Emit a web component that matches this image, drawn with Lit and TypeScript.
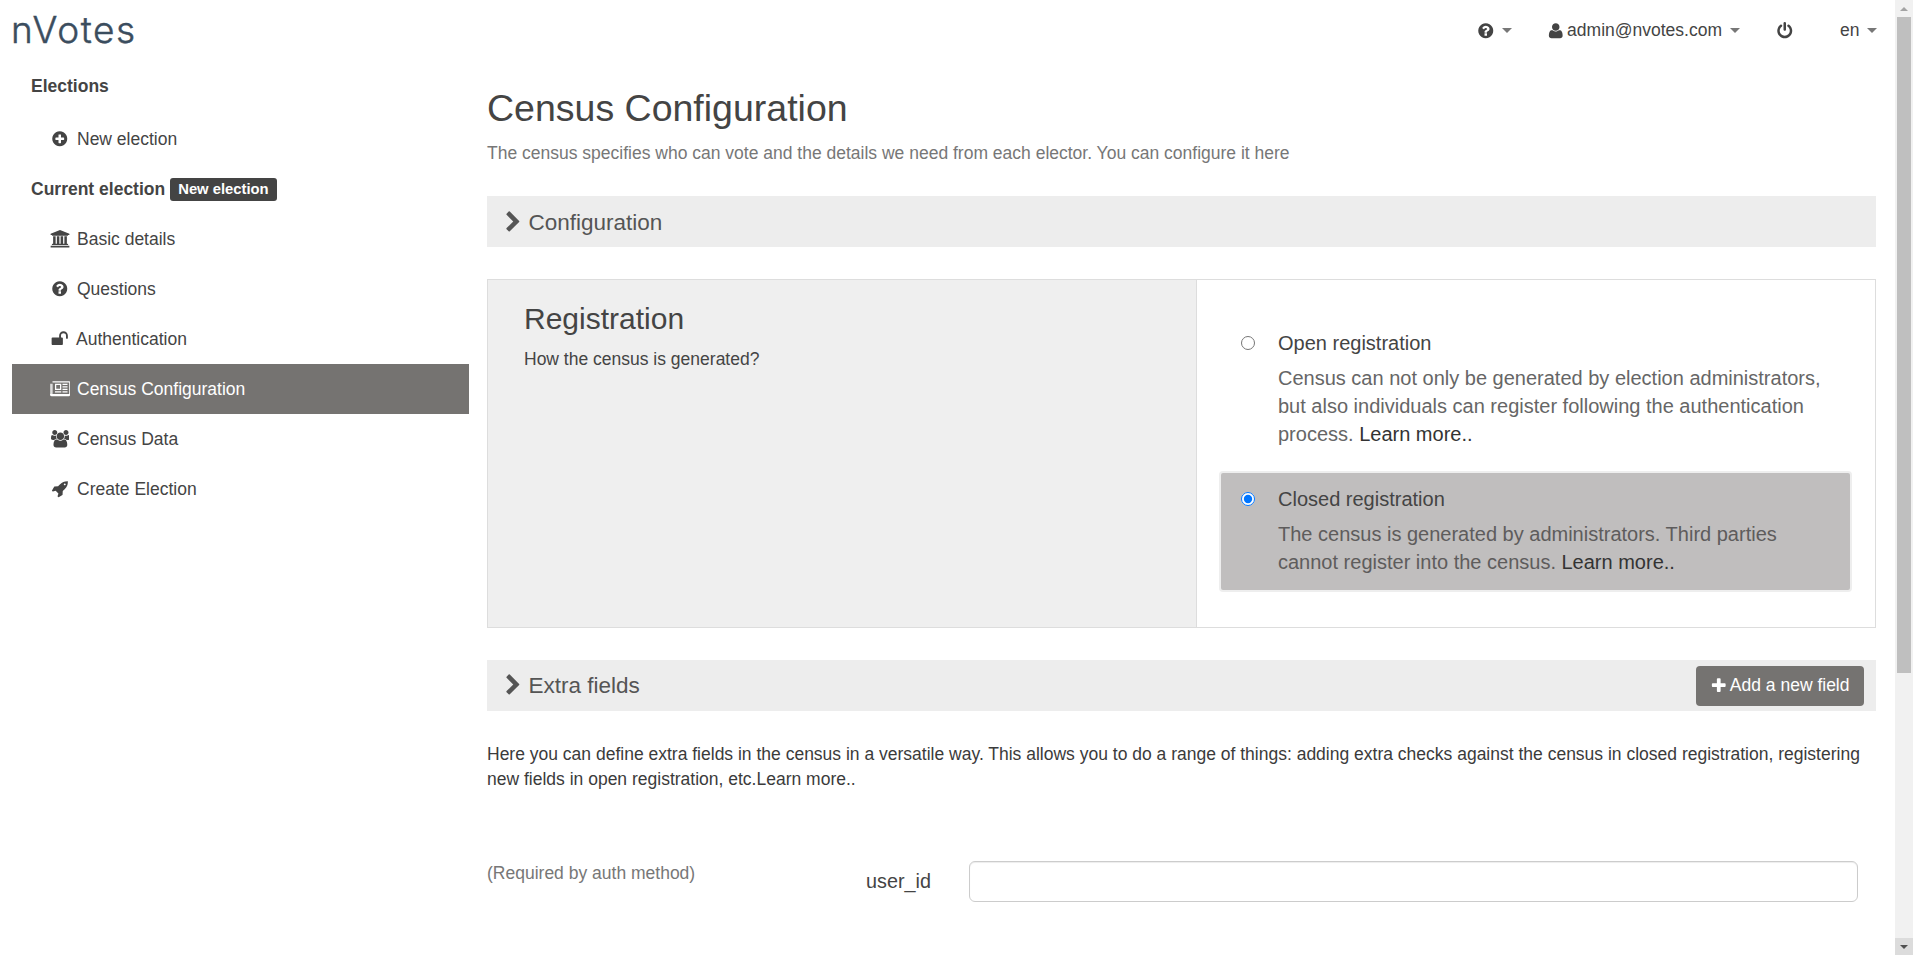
import { LitElement, html, css, svg } from "lit";
import { customElement } from "lit/decorators.js";

const P: Record<string, [number, string]> = {
  plusCircle: [1792, "M1344 960v-128q0-26-19-45t-45-19h-256v-256q0-26-19-45t-45-19h-128q-26 0-45 19t-19 45v256h-256q-26 0-45 19t-19 45v128q0 26 19 45t45 19h256v256q0 26 19 45t45 19h128q26 0 45-19t19-45v-256h256q26 0 45-19t19-45zm320-64q0 209-103 385.5t-279.5 279.5-385.5 103-385.5-103-279.5-279.5-103-385.5 103-385.5 279.5-279.5 385.5-103 385.5 103 279.5 279.5 103 385.5z"],
  question: [1792, "M1024 1376v-192q0-14-9-23t-23-9h-192q-14 0-23 9t-9 23v192q0 14 9 23t23 9h192q14 0 23-9t9-23zm256-672q0-88-55.5-163t-138.5-116-170-41q-243 0-371 213-15 24 8 42l132 100q7 6 19 6 16 0 25-12 53-68 86-92 34-24 86-24 48 0 85.5 26t37.5 59q0 38-20 61t-68 45q-63 28-115.5 86.5t-52.5 125.5v36q0 14 9 23t23 9h192q14 0 23-9t9-23q0-19 21.5-49.5t54.5-49.5q32-18 49-28.5t46-35 44.5-48 28-60.5 12.5-81zm384 192q0 209-103 385.5t-279.5 279.5-385.5 103-385.5-103-279.5-279.5-103-385.5 103-385.5 279.5-279.5 385.5-103 385.5 103 279.5 279.5 103 385.5z"],
  bank: [2048, "M1024 0l960 384v128h-128q0 26-20.5 45t-48.5 19h-1526q-28 0-48.5-19t-20.5-45h-128v-128zm-704 640h256v768h128v-768h256v768h128v-768h256v768h128v-768h256v768h59q28 0 48.5 19t20.5 45v64h-1664v-64q0-26 20.5-45t48.5-19h59v-768zm1595 960q28 0 48.5 19t20.5 45v128h-1920v-128q0-26 20.5-45t48.5-19h1782z"],
  unlock: [1792, "M1728 576v256q0 26-19 45t-45 19h-64q-26 0-45-19t-19-45v-256q0-106-75-181t-181-75-181 75-75 181v192h96q40 0 68 28t28 68v576q0 40-28 68t-68 28h-960q-40 0-68-28t-28-68v-576q0-40 28-68t68-28h672v-192q0-185 131.5-316.5t316.5-131.5 316.5 131.5 131.5 316.5z"],
  users: [1920, "M593 896q-162 5-265 128h-134q-82 0-138-40.5t-56-118.5q0-353 124-353 6 0 43.5 21t97.5 42.5 119 21.5q67 0 133-23-5 37-5 66 0 139 81 256zm1071 637q0 120-73 189.5t-194 69.5h-874q-121 0-194-69.5t-73-189.5q0-53 3.5-103.5t14-109 26.5-108.5 43-97.5 62-81 85.5-53.5 111.5-20q10 0 43 21.5t73 48 107 48 135 21.5 135-21.5 107-48 73-48 43-21.5q61 0 111.5 20t85.5 53.5 62 81 43 97.5 26.5 108.5 14 109 3.5 103.5zm-1024-1277q0 106-75 181t-181 75-181-75-75-181 75-181 181-75 181 75 75 181zm704 384q0 159-112.5 271.5t-271.5 112.5-271.5-112.5-112.5-271.5 112.5-271.5 271.5-112.5 271.5 112.5 112.5 271.5zm576 225q0 78-56 118.5t-138 40.5h-134q-103-123-265-128 81-117 81-256 0-29-5-66 66 23 133 23 59 0 119-21.5t97.5-42.5 43.5-21q124 0 124 353zm-128-609q0 106-75 181t-181 75-181-75-75-181 75-181 181-75 181 75 75 181z"],
  rocket: [1792, "M1504 448q0-40-28-68t-68-28-68 28-28 68 28 68 68 28 68-28 28-68zm224-288q0 249-75.5 430.5t-253.5 360.5q-81 80-195 176l-20 379q-2 16-16 26l-384 224q-7 4-16 4-12 0-23-9l-64-64q-13-14-8-32l85-276-281-281-276 85q-3 1-9 1-14 0-23-9l-64-64q-17-19-5-39l224-384q10-14 26-16l379-20q96-114 176-195 188-187 358-258t431-71q14 0 24 9.5t10 22.5z"],
  user: [1792, "M1600 1405q0 120-73 189.5t-194 69.5h-874q-121 0-194-69.5t-73-189.5q0-53 3.5-103.5t14-109 26.5-108.5 43-97.5 62-81 85.5-53.5 111.5-20q9 0 42 21.5t74.5 48 108 48 133.5 21.5 133.5-21.5 108-48 74.5-48 42-21.5q61 0 111.5 20t85.5 53.5 62 81 43 97.5 26.5 108.5 14 109 3.5 103.5zm-320-893q0 159-112.5 271.5t-271.5 112.5-271.5-112.5-112.5-271.5 112.5-271.5 271.5-112.5 271.5 112.5 112.5 271.5z"],
  power: [1792, "M1664 896q0 156-61 298t-164 245-245 164-298 61-298-61-245-164-164-245-61-298q0-182 80.5-343t226.5-270q43-32 95.5-25t83.5 50q32 42 24.5 94.5t-49.5 84.5q-98 74-151.5 181t-53.5 228q0 104 40.5 198.5t109.5 163.5 163.5 109.5 198.5 40.5 198.5-40.5 163.5-109.5 109.5-163.5 40.5-198.5q0-121-53.5-228t-151.5-181q-42-32-49.5-84.5t24.5-94.5q31-43 84-50t95 25q146 109 226.5 270t80.5 343zm-640-768v640q0 52-38 90t-90 38-90-38-38-90v-640q0-52 38-90t90-38 90 38 38 90z"],
  chevron: [1792, "M1363 877l-742 742q-19 19-45 19t-45-19l-166-166q-19-19-19-45t19-45l531-531-531-531q-19-19-19-45t19-45l166-166q19-19 45-19t45 19l742 742q19 19 19 45t-19 45z"],
  plus: [1792, "M1600 736v192q0 40-28 68t-68 28h-416v416q0 40-28 68t-68 28h-192q-40 0-68-28t-28-68v-416h-416q-40 0-68-28t-28-68v-192q0-40 28-68t68-28h416v-416q0-40 28-68t68-28h192q40 0 68 28t28 68v416h416q40 0 68 28t28 68z"],
  news: [2048, "M1024 512h-384v384h384zm128-128v640h-640v-640zm0 768v128h-640v-128zm640 0v128h-512v-128zm0-256v128h-512v-128zm0-256v128h-512v-128zm0-256v128h-512v-128zM256 128h1728q64 0 64 64v1344q0 128-128 128h-1728q-192 0-192-192v-1088h256zm-128 256h-64v960q0 96 32 96t32-96zm128-128v1088q0 48-16 96h1680q48 0 48-64v-1120z"],
};

function icon(name: string, size: number) {
  const [w, d] = P[name];
  const width = (size * w) / 1792;
  return html`<svg class="ic" viewBox="0 0 ${w} 1792" width=${width} height=${size} aria-hidden="true">${svg`<path fill="currentColor" fill-rule=${name === "news" ? "evenodd" : "nonzero"} d=${d}></path>`}</svg>`;
}

const NAV = [
  { ic: "bank", label: "Basic details" },
  { ic: "question", label: "Questions" },
  { ic: "unlock", label: "Authentication", tight: true },
  { ic: "news", label: "Census Configuration", active: true },
  { ic: "users", label: "Census Data" },
  { ic: "rocket", label: "Create Election" },
];

@customElement("app-root")
export class AppRoot extends LitElement {
  static styles = css`
    :host {
      display: flex;
      width: 100%;
      height: 100vh;
      overflow: hidden;
      background: #fff;
      color: #444;
      font-family: "Liberation Sans", Arial, sans-serif;
      font-size: 17.5px;
      line-height: 1.5;
    }
    * { box-sizing: border-box; }
    .ic { display: block; flex: none; }
    .page { flex: 1; min-width: 0; display: flex; flex-direction: column; height: 955px; overflow: hidden; }

    .top { height: 60px; flex: none; display: flex; align-items: flex-start; justify-content: space-between; }
    .logo {
      margin: 6px 0 0 11px;
      font-family: Inter, "Open Sans", sans-serif;
      font-size: 37px;
      line-height: 48px;
      font-weight: 300;
      letter-spacing: 1.6px;
      color: #3b4d5e;
      -webkit-text-stroke: .45px #3b4d5e;
    }
    .tools { display: flex; align-items: center; height: 60px; padding-top: 1px; color: #444; }
    .tool { display: flex; align-items: center; }
    .caret { width: 0; height: 0; border-left: 5px solid transparent; border-right: 5px solid transparent; border-top: 5px solid #777; margin-left: 7.5px; }
    .tool .ic + span:not(.caret) { margin-left: 2.5px; }
    .t1 { margin-right: 35px; }
    .t2 { margin-right: 36px; }
    .t3 { margin-right: 47px; }
    .t4 { margin-right: 18px; }

    .cols { display: flex; flex: 1; min-height: 0; }
    .side { width: 457px; flex: none; margin-left: 12px; display: flex; flex-direction: column; margin-top: 1px; }
    .sh { height: 50px; flex: none; display: flex; align-items: center; padding-left: 19px; font-weight: 700; }
    .sh.first { margin-bottom: 3px; }
    .badge {
      display: inline-block; margin-left: 5px; background: #444; color: #fff; font-size: 14.8px; font-weight: 700;
      line-height: 23px; height: 23px; padding: 0 8px; border-radius: 3px;
    }
    .ni { height: 50px; flex: none; display: flex; align-items: center; padding-left: 65px; color: #444; }
    .ni.active { background: #757371; color: #fff; }
    .nic { width: 24px; margin-left: -29px; margin-right: 5px; display: flex; justify-content: center; }
    .nic.tight { margin-right: 4px; }

    .main { flex: 1; min-width: 0; margin: 0 19px 0 18px; display: flex; flex-direction: column; }
    h1 { margin: 28px 0 0; font-size: 37.5px; font-weight: 400; line-height: 40px; color: #444; }
    .sub { margin: 11.5px 0 0; color: #777; line-height: 26px; }
    .bar {
      height: 51px; flex: none; background: #ededed; display: flex; align-items: center; justify-content: space-between;
      padding: 0 12px 0 15px; font-size: 22.5px; color: #555;
    }
    .bar1 { margin-top: 30.5px; }
    .bar1 .bar-l { padding-top: 2px; }
    .bar-l { display: flex; align-items: center; gap: 4px; }
    .panel { margin-top: 32px; height: 349px; flex: none; display: flex; border: 1px solid #ddd; }
    .pl { width: 709px; flex: none; background: #efefef; border-right: 1px solid #ddd; padding: 19px 36px; }
    .pl h2 { margin: 0; font-size: 30px; font-weight: 400; line-height: 40px; color: #444; }
    .pl p { margin: 7px 0 0; line-height: 26px; }
    .pr { flex: 1; padding: 49px 25.5px 0 23.5px; display: flex; flex-direction: column; }
    .opt { display: flex; padding: 0 14px 0 20px; color: #666; font-size: 20px; line-height: 28px; }
    .opt.on {
      margin-top: 25px; background: #c0bebe; border-radius: 2px; box-shadow: 0 0 0 2px #eee; padding: 12px 14px 14px 20px; color: #5e5c5c;
    }
    .opt input { margin: 7px 0 0 0; width: 14px; height: 14px; flex: none; }
    .opt .b { margin-left: 23.5px; }
    .opt .t { color: #444; }
    .opt .d { margin-top: 7px; }
    .opt a { color: #333; }
    .bar2 { margin-top: 32px; }
    .btn {
      height: 40px; display: flex; align-items: center; gap: 2px; padding: 0 14.5px; background: #757371; color: #fff;
      border-radius: 4px; font-size: 17.5px; border: 0; font-family: inherit;
    }
    .desc { margin: 30.5px 0 0; color: #3b3b3b; line-height: 25px; }
    .field { display: flex; align-items: center; margin-top: 69.5px; }
    .fl { width: 379px; flex: none; color: #777; margin-top: -16px; }
    .fn { width: 103px; flex: none; font-size: 19.8px; color: #444; }
    .field input { flex: 1; margin-right: 18px; height: 41px; border: 1px solid #ccc; border-radius: 6px; background: #fff; box-shadow: inset 0 1px 1px rgba(0,0,0,.075); }

    .sb { width: 18px; flex: none; background: #f1f1f1; display: flex; flex-direction: column; height: 955px; }
    .sb-btn { height: 17px; flex: none; display: flex; align-items: center; justify-content: center; }
    .sb-btn.dn { background: #dcdcdc; }
    .sb-thumb { height: 656px; flex: none; background: #bfbfbf; width: 14px; margin-left: 2px; }
    .sb-fill { flex: 1; }
    .up { width: 0; height: 0; border-left: 4px solid transparent; border-right: 4px solid transparent; border-bottom: 4px solid #a3a3a3; }
    .down { width: 0; height: 0; border-left: 4px solid transparent; border-right: 4px solid transparent; border-top: 4px solid #505050; }
  `;

  render() {
    return html`
      <div class="page">
        <header class="top">
          <div class="logo">nVotes</div>
          <div class="tools">
            <div class="tool t1">${icon("question", 17.5)}<span class="caret"></span></div>
            <div class="tool t2">${icon("user", 17.5)}<span>admin@nvotes.com</span><span class="caret"></span></div>
            <div class="tool t3">${icon("power", 17.5)}</div>
            <div class="tool t4"><span>en</span><span class="caret"></span></div>
          </div>
        </header>
        <div class="cols">
          <nav class="side">
            <div class="sh first">Elections</div>
            <div class="ni"><span class="nic">${icon("plusCircle", 17.5)}</span>New election</div>
            <div class="sh">Current election<span class="badge">New election</span></div>
            ${NAV.map((n) => html`<div class="ni ${n.active ? "active" : ""}"><span class="nic ${n.tight ? "tight" : ""}">${icon(n.ic, 17.5)}</span>${n.label}</div>`)}
          </nav>
          <main class="main">
            <h1>Census Configuration</h1>
            <p class="sub">The census specifies who can vote and the details we need from each elector. You can configure it here</p>
            <div class="bar bar1"><span class="bar-l">${icon("chevron", 22.5)}Configuration</span></div>
            <section class="panel">
              <div class="pl">
                <h2>Registration</h2>
                <p>How the census is generated?</p>
              </div>
              <div class="pr">
                <label class="opt">
                  <input type="radio" name="reg" />
                  <div class="b">
                    <div class="t">Open registration</div>
                    <div class="d">Census can not only be generated by election administrators, but also individuals can register following the authentication process. <a>Learn more..</a></div>
                  </div>
                </label>
                <label class="opt on">
                  <input type="radio" name="reg" checked />
                  <div class="b">
                    <div class="t">Closed registration</div>
                    <div class="d">The census is generated by administrators. Third parties cannot register into the census. <a>Learn more..</a></div>
                  </div>
                </label>
              </div>
            </section>
            <div class="bar bar2"><span class="bar-l">${icon("chevron", 22.5)}Extra fields</span><button class="btn">${icon("plus", 17.5)}Add a new field</button></div>
            <p class="desc">Here you can define extra fields in the census in a versatile way. This allows you to do a range of things: adding extra checks against the census in closed registration, registering new fields in open registration, etc.Learn more..</p>
            <div class="field">
              <div class="fl">(Required by auth method)</div>
              <div class="fn">user_id</div>
              <input type="text" />
            </div>
          </main>
        </div>
      </div>
      <div class="sb">
        <div class="sb-btn"><span class="up"></span></div>
        <div class="sb-thumb"></div>
        <div class="sb-fill"></div>
        <div class="sb-btn dn"><span class="down"></span></div>
      </div>
    `;
  }
}
